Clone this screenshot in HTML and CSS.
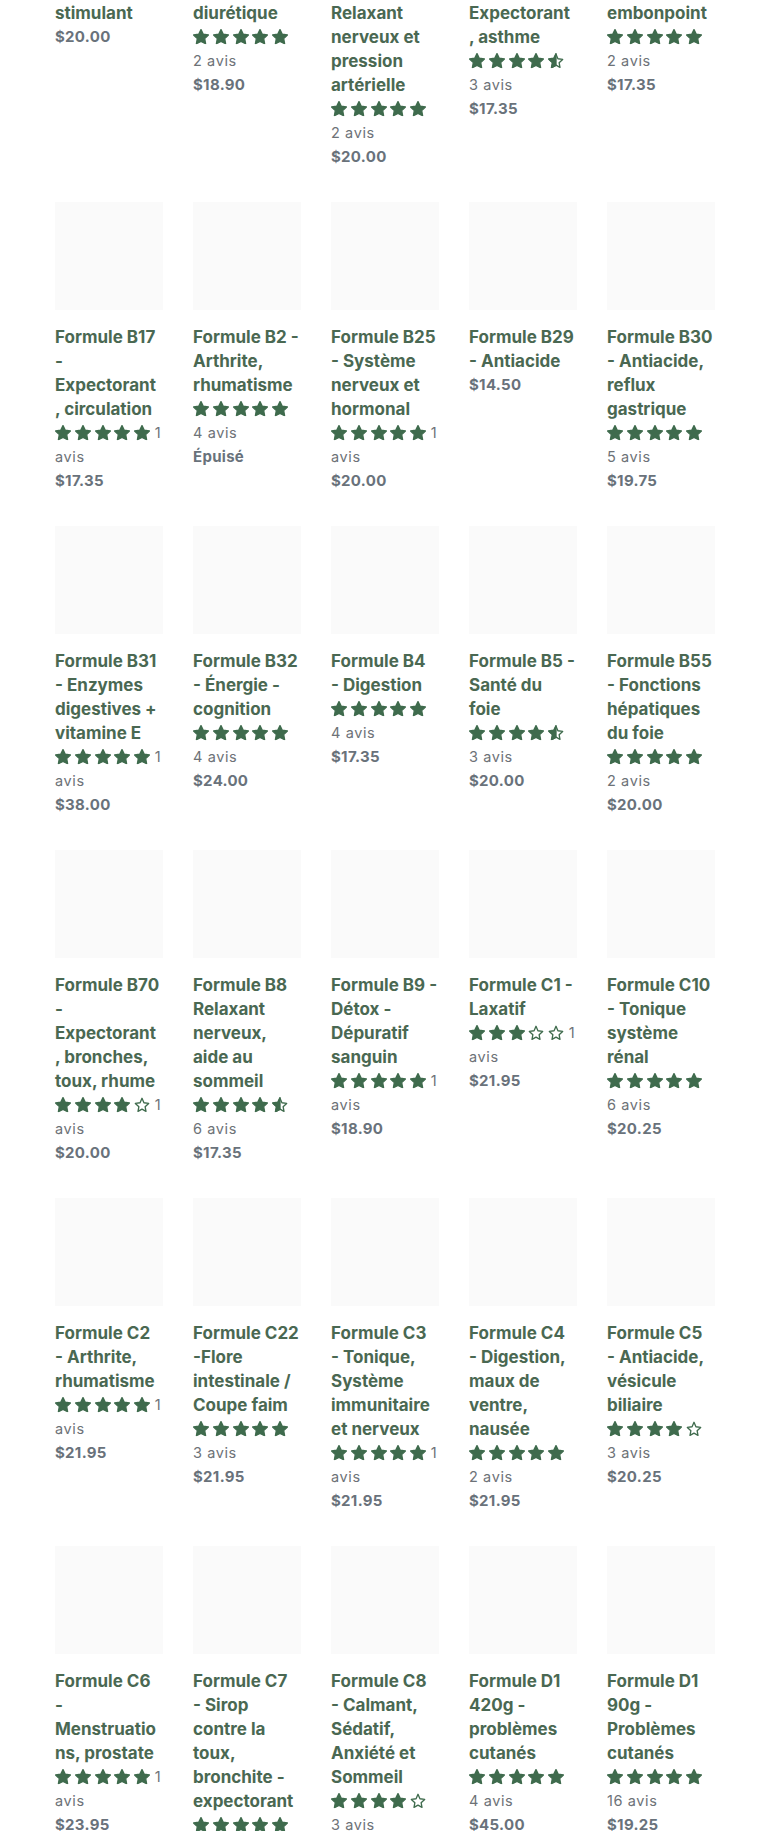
FILE: index.html
```html
<!DOCTYPE html>
<html lang="fr">
<head>
<meta charset="utf-8">
<title>Formules</title>
<link rel="stylesheet" href="styles.css">
</head>
<body>
<svg class="sprite" aria-hidden="true" xmlns="http://www.w3.org/2000/svg">
  <symbol id="star-full" viewBox="1.2 1.2 21.6 20.6">
    <polygon points="12,2 15.09,8.26 22,9.27 17,14.14 18.18,21.02 12,17.77 5.82,21.02 7,14.14 2,9.27 8.91,8.26" fill="currentColor" stroke="currentColor" stroke-width="1.8" stroke-linejoin="round"/>
  </symbol>
  <symbol id="star-empty" viewBox="1.2 1.2 21.6 20.6">
    <polygon points="12,2.9 14.6,8.9 21,9.8 16.2,14.3 17.4,20.6 12,17.5 6.6,20.6 7.8,14.3 3,9.8 9.4,8.9" fill="none" stroke="currentColor" stroke-width="1.8" stroke-linejoin="round"/>
  </symbol>
  <symbol id="star-half" viewBox="1.2 1.2 21.6 20.6">
    <polygon points="12,2.9 14.6,8.9 21,9.8 16.2,14.3 17.4,20.6 12,17.5 6.6,20.6 7.8,14.3 3,9.8 9.4,8.9" fill="none" stroke="currentColor" stroke-width="1.8" stroke-linejoin="round"/>
    <polygon points="12,2 8.91,8.26 2,9.27 7,14.14 5.82,21.02 12,17.77" fill="currentColor" stroke="currentColor" stroke-width="1.8" stroke-linejoin="round"/>
  </symbol>
</svg>

<main class="collection">
  <ul class="grid">
    <!-- row 1 -->
    <li class="card">
      <div class="card__image"></div>
      <h3 class="card__title">Formule B12 -<br>stimulant</h3>
      <p class="card__price">$20.00</p>
    </li>
    <li class="card">
      <div class="card__image"></div>
      <h3 class="card__title">Formule B13 -<br>diurétique</h3>
      <div class="card__reviews"><span class="stars"><svg class="star"><use href="#star-full"/></svg><svg class="star"><use href="#star-full"/></svg><svg class="star"><use href="#star-full"/></svg><svg class="star"><use href="#star-full"/></svg><svg class="star"><use href="#star-full"/></svg></span><span class="count count--block">2 avis</span></div>
      <p class="card__price">$18.90</p>
    </li>
    <li class="card">
      <div class="card__image"></div>
      <h3 class="card__title">Formule B14 -<br>Relaxant<br>nerveux et<br>pression<br>artérielle</h3>
      <div class="card__reviews"><span class="stars"><svg class="star"><use href="#star-full"/></svg><svg class="star"><use href="#star-full"/></svg><svg class="star"><use href="#star-full"/></svg><svg class="star"><use href="#star-full"/></svg><svg class="star"><use href="#star-full"/></svg></span><span class="count count--block">2 avis</span></div>
      <p class="card__price">$20.00</p>
    </li>
    <li class="card">
      <div class="card__image"></div>
      <h3 class="card__title">Formule B15 -<br>Expectorant<br>, asthme</h3>
      <div class="card__reviews"><span class="stars"><svg class="star"><use href="#star-full"/></svg><svg class="star"><use href="#star-full"/></svg><svg class="star"><use href="#star-full"/></svg><svg class="star"><use href="#star-full"/></svg><svg class="star"><use href="#star-half"/></svg></span><span class="count count--block">3 avis</span></div>
      <p class="card__price">$17.35</p>
    </li>
    <li class="card">
      <div class="card__image"></div>
      <h3 class="card__title">Formule B16 -<br>embonpoint</h3>
      <div class="card__reviews"><span class="stars"><svg class="star"><use href="#star-full"/></svg><svg class="star"><use href="#star-full"/></svg><svg class="star"><use href="#star-full"/></svg><svg class="star"><use href="#star-full"/></svg><svg class="star"><use href="#star-full"/></svg></span><span class="count count--block">2 avis</span></div>
      <p class="card__price">$17.35</p>
    </li>

    <!-- row 2 -->
    <li class="card">
      <div class="card__image"></div>
      <h3 class="card__title">Formule B17<br>-<br>Expectorant<br>, circulation</h3>
      <div class="card__reviews"><span class="stars"><svg class="star"><use href="#star-full"/></svg><svg class="star"><use href="#star-full"/></svg><svg class="star"><use href="#star-full"/></svg><svg class="star"><use href="#star-full"/></svg><svg class="star"><use href="#star-full"/></svg></span> <span class="count">1 avis</span></div>
      <p class="card__price">$17.35</p>
    </li>
    <li class="card">
      <div class="card__image"></div>
      <h3 class="card__title">Formule B2 -<br>Arthrite,<br>rhumatisme</h3>
      <div class="card__reviews"><span class="stars"><svg class="star"><use href="#star-full"/></svg><svg class="star"><use href="#star-full"/></svg><svg class="star"><use href="#star-full"/></svg><svg class="star"><use href="#star-full"/></svg><svg class="star"><use href="#star-full"/></svg></span><span class="count count--block">4 avis</span></div>
      <p class="card__price">Épuisé</p>
    </li>
    <li class="card">
      <div class="card__image"></div>
      <h3 class="card__title">Formule B25<br>- Système<br>nerveux et<br>hormonal</h3>
      <div class="card__reviews"><span class="stars"><svg class="star"><use href="#star-full"/></svg><svg class="star"><use href="#star-full"/></svg><svg class="star"><use href="#star-full"/></svg><svg class="star"><use href="#star-full"/></svg><svg class="star"><use href="#star-full"/></svg></span> <span class="count">1 avis</span></div>
      <p class="card__price">$20.00</p>
    </li>
    <li class="card">
      <div class="card__image"></div>
      <h3 class="card__title">Formule B29<br>- Antiacide</h3>
      <p class="card__price">$14.50</p>
    </li>
    <li class="card">
      <div class="card__image"></div>
      <h3 class="card__title">Formule B30<br>- Antiacide,<br>reflux<br>gastrique</h3>
      <div class="card__reviews"><span class="stars"><svg class="star"><use href="#star-full"/></svg><svg class="star"><use href="#star-full"/></svg><svg class="star"><use href="#star-full"/></svg><svg class="star"><use href="#star-full"/></svg><svg class="star"><use href="#star-full"/></svg></span><span class="count count--block">5 avis</span></div>
      <p class="card__price">$19.75</p>
    </li>

    <!-- row 3 -->
    <li class="card">
      <div class="card__image"></div>
      <h3 class="card__title">Formule B31<br>- Enzymes<br>digestives +<br>vitamine E</h3>
      <div class="card__reviews"><span class="stars"><svg class="star"><use href="#star-full"/></svg><svg class="star"><use href="#star-full"/></svg><svg class="star"><use href="#star-full"/></svg><svg class="star"><use href="#star-full"/></svg><svg class="star"><use href="#star-full"/></svg></span> <span class="count">1 avis</span></div>
      <p class="card__price">$38.00</p>
    </li>
    <li class="card">
      <div class="card__image"></div>
      <h3 class="card__title">Formule B32<br>- Énergie -<br>cognition</h3>
      <div class="card__reviews"><span class="stars"><svg class="star"><use href="#star-full"/></svg><svg class="star"><use href="#star-full"/></svg><svg class="star"><use href="#star-full"/></svg><svg class="star"><use href="#star-full"/></svg><svg class="star"><use href="#star-full"/></svg></span><span class="count count--block">4 avis</span></div>
      <p class="card__price">$24.00</p>
    </li>
    <li class="card">
      <div class="card__image"></div>
      <h3 class="card__title">Formule B4<br>- Digestion</h3>
      <div class="card__reviews"><span class="stars"><svg class="star"><use href="#star-full"/></svg><svg class="star"><use href="#star-full"/></svg><svg class="star"><use href="#star-full"/></svg><svg class="star"><use href="#star-full"/></svg><svg class="star"><use href="#star-full"/></svg></span><span class="count count--block">4 avis</span></div>
      <p class="card__price">$17.35</p>
    </li>
    <li class="card">
      <div class="card__image"></div>
      <h3 class="card__title">Formule B5 -<br>Santé du<br>foie</h3>
      <div class="card__reviews"><span class="stars"><svg class="star"><use href="#star-full"/></svg><svg class="star"><use href="#star-full"/></svg><svg class="star"><use href="#star-full"/></svg><svg class="star"><use href="#star-full"/></svg><svg class="star"><use href="#star-half"/></svg></span><span class="count count--block">3 avis</span></div>
      <p class="card__price">$20.00</p>
    </li>
    <li class="card">
      <div class="card__image"></div>
      <h3 class="card__title">Formule B55<br>- Fonctions<br>hépatiques<br>du foie</h3>
      <div class="card__reviews"><span class="stars"><svg class="star"><use href="#star-full"/></svg><svg class="star"><use href="#star-full"/></svg><svg class="star"><use href="#star-full"/></svg><svg class="star"><use href="#star-full"/></svg><svg class="star"><use href="#star-full"/></svg></span><span class="count count--block">2 avis</span></div>
      <p class="card__price">$20.00</p>
    </li>

    <!-- row 4 -->
    <li class="card">
      <div class="card__image"></div>
      <h3 class="card__title">Formule B70<br>-<br>Expectorant<br>, bronches,<br>toux, rhume</h3>
      <div class="card__reviews"><span class="stars"><svg class="star"><use href="#star-full"/></svg><svg class="star"><use href="#star-full"/></svg><svg class="star"><use href="#star-full"/></svg><svg class="star"><use href="#star-full"/></svg><svg class="star"><use href="#star-empty"/></svg></span> <span class="count">1 avis</span></div>
      <p class="card__price">$20.00</p>
    </li>
    <li class="card">
      <div class="card__image"></div>
      <h3 class="card__title">Formule B8<br>Relaxant<br>nerveux,<br>aide au<br>sommeil</h3>
      <div class="card__reviews"><span class="stars"><svg class="star"><use href="#star-full"/></svg><svg class="star"><use href="#star-full"/></svg><svg class="star"><use href="#star-full"/></svg><svg class="star"><use href="#star-full"/></svg><svg class="star"><use href="#star-half"/></svg></span><span class="count count--block">6 avis</span></div>
      <p class="card__price">$17.35</p>
    </li>
    <li class="card">
      <div class="card__image"></div>
      <h3 class="card__title">Formule B9 -<br>Détox -<br>Dépuratif<br>sanguin</h3>
      <div class="card__reviews"><span class="stars"><svg class="star"><use href="#star-full"/></svg><svg class="star"><use href="#star-full"/></svg><svg class="star"><use href="#star-full"/></svg><svg class="star"><use href="#star-full"/></svg><svg class="star"><use href="#star-full"/></svg></span> <span class="count">1 avis</span></div>
      <p class="card__price">$18.90</p>
    </li>
    <li class="card">
      <div class="card__image"></div>
      <h3 class="card__title">Formule C1 -<br>Laxatif</h3>
      <div class="card__reviews"><span class="stars"><svg class="star"><use href="#star-full"/></svg><svg class="star"><use href="#star-full"/></svg><svg class="star"><use href="#star-full"/></svg><svg class="star"><use href="#star-empty"/></svg><svg class="star"><use href="#star-empty"/></svg></span> <span class="count">1 avis</span></div>
      <p class="card__price">$21.95</p>
    </li>
    <li class="card">
      <div class="card__image"></div>
      <h3 class="card__title">Formule C10<br>- Tonique<br>système<br>rénal</h3>
      <div class="card__reviews"><span class="stars"><svg class="star"><use href="#star-full"/></svg><svg class="star"><use href="#star-full"/></svg><svg class="star"><use href="#star-full"/></svg><svg class="star"><use href="#star-full"/></svg><svg class="star"><use href="#star-full"/></svg></span><span class="count count--block">6 avis</span></div>
      <p class="card__price">$20.25</p>
    </li>

    <!-- row 5 -->
    <li class="card">
      <div class="card__image"></div>
      <h3 class="card__title">Formule C2<br>- Arthrite,<br>rhumatisme</h3>
      <div class="card__reviews"><span class="stars"><svg class="star"><use href="#star-full"/></svg><svg class="star"><use href="#star-full"/></svg><svg class="star"><use href="#star-full"/></svg><svg class="star"><use href="#star-full"/></svg><svg class="star"><use href="#star-full"/></svg></span> <span class="count">1 avis</span></div>
      <p class="card__price">$21.95</p>
    </li>
    <li class="card">
      <div class="card__image"></div>
      <h3 class="card__title">Formule C22<br>-Flore<br>intestinale /<br>Coupe faim</h3>
      <div class="card__reviews"><span class="stars"><svg class="star"><use href="#star-full"/></svg><svg class="star"><use href="#star-full"/></svg><svg class="star"><use href="#star-full"/></svg><svg class="star"><use href="#star-full"/></svg><svg class="star"><use href="#star-full"/></svg></span><span class="count count--block">3 avis</span></div>
      <p class="card__price">$21.95</p>
    </li>
    <li class="card">
      <div class="card__image"></div>
      <h3 class="card__title">Formule C3<br>- Tonique,<br>Système<br>immunitaire<br>et nerveux</h3>
      <div class="card__reviews"><span class="stars"><svg class="star"><use href="#star-full"/></svg><svg class="star"><use href="#star-full"/></svg><svg class="star"><use href="#star-full"/></svg><svg class="star"><use href="#star-full"/></svg><svg class="star"><use href="#star-full"/></svg></span> <span class="count">1 avis</span></div>
      <p class="card__price">$21.95</p>
    </li>
    <li class="card">
      <div class="card__image"></div>
      <h3 class="card__title">Formule C4<br>- Digestion,<br>maux de<br>ventre,<br>nausée</h3>
      <div class="card__reviews"><span class="stars"><svg class="star"><use href="#star-full"/></svg><svg class="star"><use href="#star-full"/></svg><svg class="star"><use href="#star-full"/></svg><svg class="star"><use href="#star-full"/></svg><svg class="star"><use href="#star-full"/></svg></span><span class="count count--block">2 avis</span></div>
      <p class="card__price">$21.95</p>
    </li>
    <li class="card">
      <div class="card__image"></div>
      <h3 class="card__title">Formule C5<br>- Antiacide,<br>vésicule<br>biliaire</h3>
      <div class="card__reviews"><span class="stars"><svg class="star"><use href="#star-full"/></svg><svg class="star"><use href="#star-full"/></svg><svg class="star"><use href="#star-full"/></svg><svg class="star"><use href="#star-full"/></svg><svg class="star"><use href="#star-empty"/></svg></span><span class="count count--block">3 avis</span></div>
      <p class="card__price">$20.25</p>
    </li>

    <!-- row 6 -->
    <li class="card">
      <div class="card__image"></div>
      <h3 class="card__title">Formule C6<br>-<br>Menstruatio<br>ns, prostate</h3>
      <div class="card__reviews"><span class="stars"><svg class="star"><use href="#star-full"/></svg><svg class="star"><use href="#star-full"/></svg><svg class="star"><use href="#star-full"/></svg><svg class="star"><use href="#star-full"/></svg><svg class="star"><use href="#star-full"/></svg></span> <span class="count">1 avis</span></div>
      <p class="card__price">$23.95</p>
    </li>
    <li class="card">
      <div class="card__image"></div>
      <h3 class="card__title">Formule C7<br>- Sirop<br>contre la<br>toux,<br>bronchite -<br>expectorant</h3>
      <div class="card__reviews"><span class="stars"><svg class="star"><use href="#star-full"/></svg><svg class="star"><use href="#star-full"/></svg><svg class="star"><use href="#star-full"/></svg><svg class="star"><use href="#star-full"/></svg><svg class="star"><use href="#star-full"/></svg></span><span class="count count--block">2 avis</span></div>
      <p class="card__price">$18.90</p>
    </li>
    <li class="card">
      <div class="card__image"></div>
      <h3 class="card__title">Formule C8<br>- Calmant,<br>Sédatif,<br>Anxiété et<br>Sommeil</h3>
      <div class="card__reviews"><span class="stars"><svg class="star"><use href="#star-full"/></svg><svg class="star"><use href="#star-full"/></svg><svg class="star"><use href="#star-full"/></svg><svg class="star"><use href="#star-full"/></svg><svg class="star"><use href="#star-empty"/></svg></span><span class="count count--block">3 avis</span></div>
      <p class="card__price">$21.95</p>
    </li>
    <li class="card">
      <div class="card__image"></div>
      <h3 class="card__title">Formule D1<br>420g -<br>problèmes<br>cutanés</h3>
      <div class="card__reviews"><span class="stars"><svg class="star"><use href="#star-full"/></svg><svg class="star"><use href="#star-full"/></svg><svg class="star"><use href="#star-full"/></svg><svg class="star"><use href="#star-full"/></svg><svg class="star"><use href="#star-full"/></svg></span><span class="count count--block">4 avis</span></div>
      <p class="card__price">$45.00</p>
    </li>
    <li class="card">
      <div class="card__image"></div>
      <h3 class="card__title">Formule D1<br>90g -<br>Problèmes<br>cutanés</h3>
      <div class="card__reviews"><span class="stars"><svg class="star"><use href="#star-full"/></svg><svg class="star"><use href="#star-full"/></svg><svg class="star"><use href="#star-full"/></svg><svg class="star"><use href="#star-full"/></svg><svg class="star"><use href="#star-full"/></svg></span><span class="count count--block">16 avis</span></div>
      <p class="card__price">$19.25</p>
    </li>
  </ul>
</main>
</body>
</html>
```

FILE: styles.css
```css
html, body {
  margin: 0;
  padding: 0;
  background: #ffffff;
}

body {
  font-family: "Inter", "Liberation Sans", "DejaVu Sans", sans-serif;
  overflow: hidden;
}

.sprite {
  display: block;
  width: 0;
  height: 0;
  overflow: hidden;
}

.collection {
  width: 660px;
  margin: -146px auto 0;
}

.grid {
  list-style: none;
  margin: 0;
  padding: 0;
  display: grid;
  grid-template-columns: repeat(5, 108px);
  column-gap: 30px;
  align-items: start;
}

.card {
  margin-bottom: 33px;
}

.card__image {
  height: 108px;
  background: #fafafa;
  margin-bottom: 15px;
}

.card__title {
  margin: 0;
  font-size: 17px;
  font-weight: 700;
  line-height: 24px;
  color: #4a6852;
  white-space: nowrap;
  letter-spacing: 0;
}

.card__reviews {
  font-size: 14.5px;
  line-height: 24px;
  color: #6d7277;
  letter-spacing: 0.6px;
}

.stars {
  display: inline-flex;
  align-items: center;
  gap: 3.75px;
  height: 24px;
  vertical-align: top;
  color: #3f6b4d;
  letter-spacing: 0;
}

.star {
  width: 16px;
  height: 15.3px;
  display: block;
}

.count--block {
  display: block;
}

.card__price {
  margin: 0;
  font-size: 15px;
  font-weight: 700;
  line-height: 24px;
  color: #69727b;
  letter-spacing: 0.3px;
}
```
